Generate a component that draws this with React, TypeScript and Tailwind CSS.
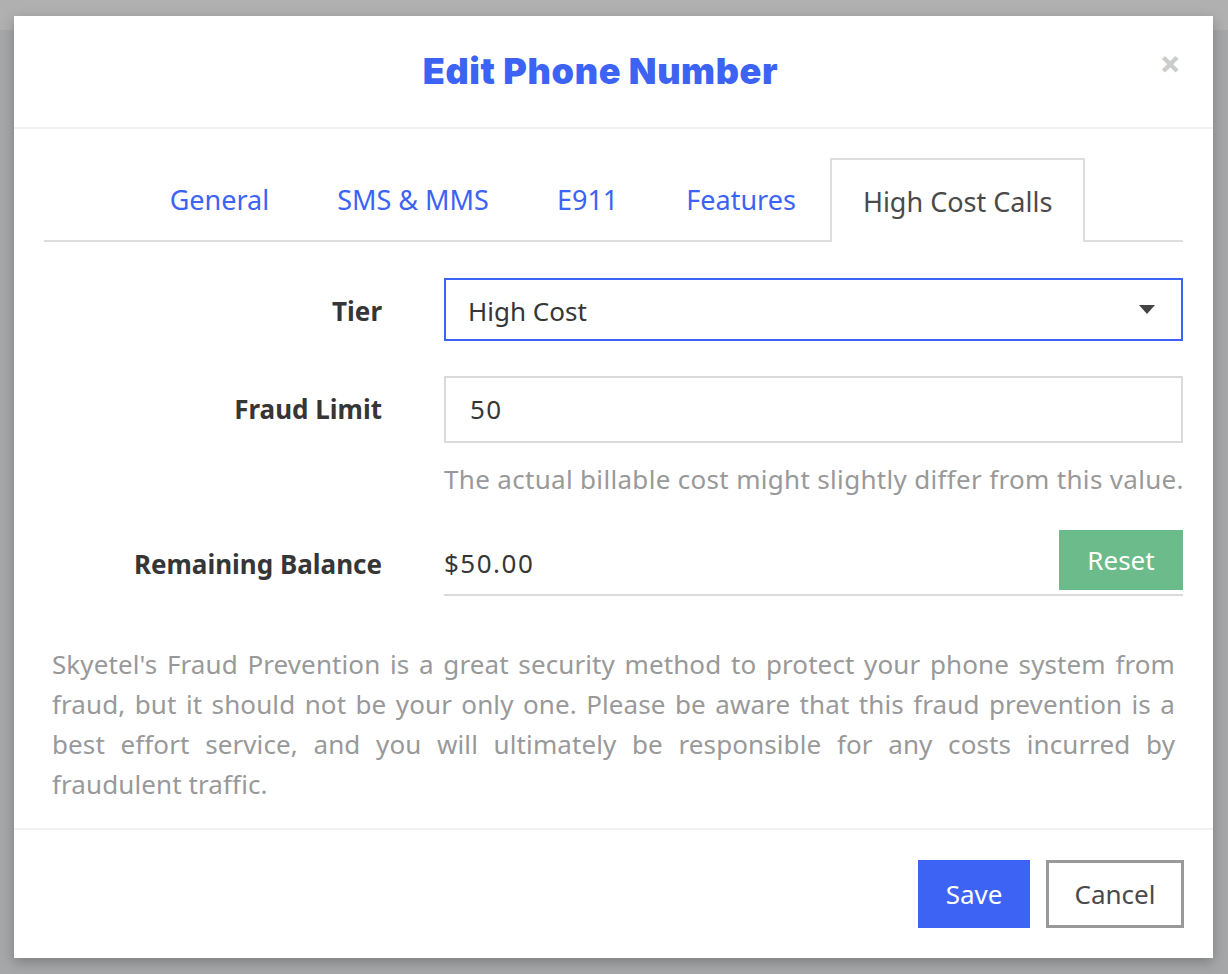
import React from "react";

const tabs = ["General", "SMS & MMS", "E911", "Features", "High Cost Calls"];

export default function App() {
  return (
    <div className="relative h-[974px] w-[1228px] overflow-hidden bg-[#a6a7a9] pl-[14px] pt-[16px] font-['Noto_Sans',sans-serif]">
      <div className="absolute left-0 top-0 h-[30px] w-full bg-[#b0b0b0]"></div>

      <div className="relative flex h-[942px] w-[1199px] flex-col bg-white shadow-[0_4px_12px_rgba(0,0,0,0.25)]">
        {/* header */}
        <div className="relative flex h-[113px] shrink-0 items-center justify-center border-b-2 border-[#f1f1f1] pr-[26px]">
          <h1 className="mt-[-2px] font-['Inter',sans-serif] text-[36px] font-black tracking-[0.6px] text-[#3d63f5]">
            Edit Phone Number
          </h1>
          <span className="absolute right-[32px] top-[31px] font-['Inter',sans-serif] text-[32px] font-bold leading-none text-[#cccccc]">
            ×
          </span>
        </div>

        {/* body */}
        <div className="flex flex-1 flex-col px-[30px] pt-[29px]">
          <div className="flex h-[84px] items-stretch justify-center border-b-2 border-[#dddddd] pr-[6px]">
            {tabs.map((t) => {
              const active = t === "High Cost Calls";
              return (
                <div
                  key={t}
                  className={
                    active
                      ? "mb-[-2px] flex items-center border-2 border-b-0 border-[#dddddd] bg-white px-[31px] pt-[2px] text-[27px] text-[#4a4a4a]"
                      : "flex items-center px-[34px] pt-[2px] text-[27px] text-[#3d63f5]"
                  }
                >
                  {t}
                </div>
              );
            })}
          </div>

          {/* tier */}
          <div className="mt-[36px] flex items-center">
            <div className="w-[338px] pt-[4px] text-right text-[26px] font-bold text-[#363636]">Tier</div>
            <div className="ml-[62px] flex h-[63px] flex-1 items-center justify-between border-2 border-[#3d63f5] pl-[22px] pr-[26px] text-[26px] text-[#363636]">
              <span className="pt-[4px]">High Cost</span>
              <svg width="16" height="9" viewBox="0 0 16 9">
                <path d="M0 0 L16 0 L8 9 Z" fill="#444" />
              </svg>
            </div>
          </div>

          {/* fraud limit */}
          <div className="mt-[35px] flex items-center">
            <div className="w-[338px] text-right text-[26px] font-bold text-[#363636]">Fraud Limit</div>
            <div className="ml-[62px] flex h-[67px] flex-1 items-center border-2 border-[#d9dadc] pl-[24px] text-[26px] tracking-[1.5px] text-[#363636]">
              50
            </div>
          </div>
          <div className="ml-[400px] mt-[19px] whitespace-nowrap text-[26px] leading-[34px] tracking-[0.32px] text-[#999999]">
            The actual billable cost might slightly differ from this value.
          </div>

          {/* remaining balance */}
          <div className="mt-[34px] flex items-end">
            <div className="w-[338px] pb-[12px] text-right text-[26px] font-bold text-[#363636]">
              Remaining Balance
            </div>
            <div className="ml-[62px] flex flex-1 items-center justify-between border-b-2 border-[#d9dadc] pb-[4px]">
              <span className="pt-[6px] text-[26px] tracking-[1.5px] text-[#363636]">$50.00</span>
              <span className="flex h-[60px] w-[124px] items-center justify-center bg-[#6bbb8b] text-[26px] text-white">
                Reset
              </span>
            </div>
          </div>

          <p className="mt-[48px] px-[8px] text-justify text-[26px] leading-[40px] tracking-[0.1px] text-[#999999]">
            Skyetel's Fraud Prevention is a great security method to protect your phone system from fraud, but it
            should not be your only one. Please be aware that this fraud prevention is a best effort service, and you
            will ultimately be responsible for any costs incurred by fraudulent traffic.
          </p>
        </div>

        {/* footer */}
        <div className="flex h-[130px] shrink-0 items-center justify-end gap-[16px] border-t-2 border-[#f1f1f1] pr-[29px]">
          <span className="flex h-[68px] w-[112px] items-center justify-center bg-[#3d63f5] text-[26px] text-white">
            Save
          </span>
          <span className="flex h-[68px] w-[138px] items-center justify-center border-[3px] border-[#999999] text-[26px] text-[#4a4a4a]">
            Cancel
          </span>
        </div>
      </div>
    </div>
  );
}
